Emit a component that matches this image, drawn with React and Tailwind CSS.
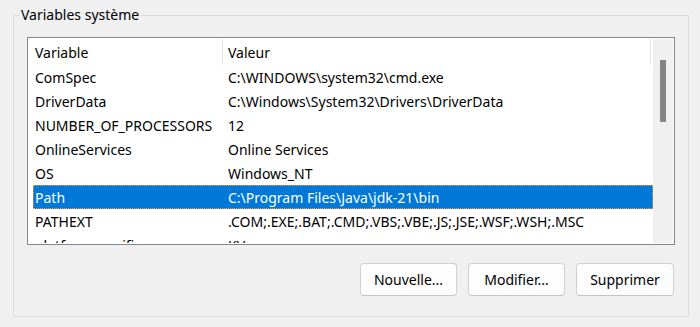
const rows = [
  ["ComSpec", "C:\\WINDOWS\\system32\\cmd.exe"],
  ["DriverData", "C:\\Windows\\System32\\Drivers\\DriverData"],
  ["NUMBER_OF_PROCESSORS", "12"],
  ["OnlineServices", "Online Services"],
  ["OS", "Windows_NT"],
  ["Path", "C:\\Program Files\\Java\\jdk-21\\bin"],
  ["PATHEXT", ".COM;.EXE;.BAT;.CMD;.VBS;.VBE;.JS;.JSE;.WSF;.WSH;.MSC"],
  ["platformspecific", "KV"],
];

export default function App() {
  return (
    <div className="w-[700px] h-[327px] bg-[#f0f0f0] pt-[6px] overflow-hidden text-[14px] text-black font-['Noto_Sans',sans-serif]">
      {/* Variables système */}
      <fieldset className="ml-[13px] w-[676px] border border-[#dcdcdc] pb-[20px]">
        <legend className="ml-[5px] px-[2px] leading-[18px]">Variables système</legend>

        <div className="mt-[13px] ml-[13px] w-[648px] h-[208px] border border-[#828790] bg-white p-px flex">
          <div className="flex-1 overflow-hidden">
            {/* header */}
            <div className="flex h-[26px] items-center">
              <div className="w-[193px] pl-[6px]">Variable</div>
              <div className="w-[429px] h-full flex items-center pl-[5px] border-l border-r border-[#e5e5e5]">Valeur</div>
            </div>
            {rows.map(([name, value]) => {
              const selected = name === "Path";
              return (
                <div
                  key={name}
                  className={
                    selected
                      ? "ml-[4px] h-[24px] flex items-center bg-[#0078d7] text-white border border-dotted border-[#f0a030]"
                      : "ml-[4px] h-[24px] flex items-center border border-transparent"
                  }
                >
                  <div className="w-[194px] pl-px whitespace-nowrap">{name}</div>
                  <div className="whitespace-nowrap">{value}</div>
                </div>
              );
            })}
          </div>
          {/* scrollbar */}
          <div className="w-[20px] bg-[#f0f0f0] flex justify-center">
            <div className="mt-[21px] w-[6px] h-[62px] bg-[#858585]"></div>
          </div>
        </div>

        <div className="mt-[18px] mr-[14px] flex justify-end gap-[11px]">
          <button className="w-[97px] h-[33px] rounded-[4px] border border-[#d0d0d0] border-b-[#c4c4c4] bg-[#fdfdfd]">Nouvelle...</button>
          <button className="w-[97px] h-[33px] rounded-[4px] border border-[#d0d0d0] border-b-[#c4c4c4] bg-[#fdfdfd]">Modifier...</button>
          <button className="w-[98px] h-[33px] rounded-[4px] border border-[#d0d0d0] border-b-[#c4c4c4] bg-[#fdfdfd]">Supprimer</button>
        </div>
      </fieldset>
    </div>
  );
}
